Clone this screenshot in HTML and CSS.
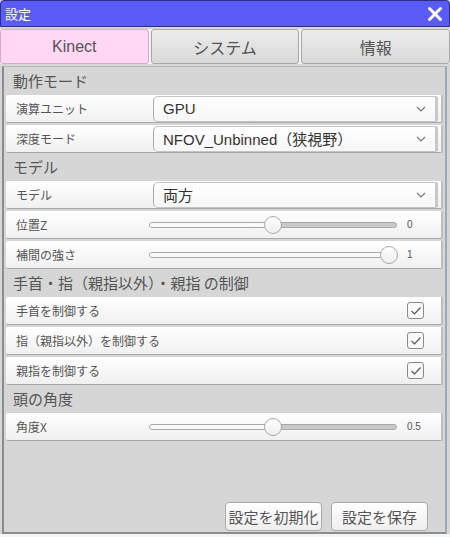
FILE: index.html
```html
<!DOCTYPE html>
<html lang="ja">
<head>
<meta charset="utf-8">
<link rel="stylesheet" href="styles.css">
</head>
<body>
<div class="window">
  <div class="titlebar">
    <span class="title">設定</span>
    <svg class="close" width="16" height="16" viewBox="0 0 16 16"><path d="M2.5 2.5 L13.5 13.5 M13.5 2.5 L2.5 13.5" stroke="#fff" stroke-width="3" stroke-linecap="round"/></svg>
  </div>
  <div class="tabs">
    <div class="tab active">Kinect</div>
    <div class="tab">システム</div>
    <div class="tab">情報</div>
  </div>
  <div class="panel">
    <div class="section">動作モード</div>
    <div class="row">
      <span class="label">演算ユニット</span>
      <div class="select"><span>GPU</span><svg class="chev" width="10" height="6" viewBox="0 0 10 6"><path d="M1 1 L5 5 L9 1" fill="none" stroke="#777" stroke-width="1.2"/></svg></div>
    </div>
    <div class="row">
      <span class="label">深度モード</span>
      <div class="select"><span>NFOV_Unbinned（狭視野）</span><svg class="chev" width="10" height="6" viewBox="0 0 10 6"><path d="M1 1 L5 5 L9 1" fill="none" stroke="#777" stroke-width="1.2"/></svg></div>
    </div>
    <div class="section">モデル</div>
    <div class="row">
      <span class="label">モデル</span>
      <div class="select"><span>両方</span><svg class="chev" width="10" height="6" viewBox="0 0 10 6"><path d="M1 1 L5 5 L9 1" fill="none" stroke="#777" stroke-width="1.2"/></svg></div>
    </div>
    <div class="row">
      <span class="label">位置Z</span>
      <div class="slider"><div class="track"><div class="fill" style="width:50%"></div><div class="thumb" style="left:50%"></div></div><span class="val">0</span></div>
    </div>
    <div class="row">
      <span class="label">補間の強さ</span>
      <div class="slider"><div class="track"><div class="fill" style="width:97%"></div><div class="thumb" style="left:97%"></div></div><span class="val">1</span></div>
    </div>
    <div class="section">手首・指（親指以外）・親指 の制御</div>
    <div class="row">
      <span class="label">手首を制御する</span>
      <div class="check"><svg width="12" height="10" viewBox="0 0 12 10"><path d="M1.5 5 L4.5 8 L10.5 1.5" fill="none" stroke="#555" stroke-width="1.2"/></svg></div>
    </div>
    <div class="row">
      <span class="label">指（親指以外）を制御する</span>
      <div class="check"><svg width="12" height="10" viewBox="0 0 12 10"><path d="M1.5 5 L4.5 8 L10.5 1.5" fill="none" stroke="#555" stroke-width="1.2"/></svg></div>
    </div>
    <div class="row">
      <span class="label">親指を制御する</span>
      <div class="check"><svg width="12" height="10" viewBox="0 0 12 10"><path d="M1.5 5 L4.5 8 L10.5 1.5" fill="none" stroke="#555" stroke-width="1.2"/></svg></div>
    </div>
    <div class="section">頭の角度</div>
    <div class="row">
      <span class="label">角度X</span>
      <div class="slider"><div class="track"><div class="fill" style="width:50%"></div><div class="thumb" style="left:50%"></div></div><span class="val">0.5</span></div>
    </div>
    <div class="spacer"></div>
    <div class="buttons">
      <button class="btn">設定を初期化</button>
      <button class="btn">設定を保存</button>
    </div>
  </div>
</div>
</body>
</html>
```
FILE: styles.css
```css
* { box-sizing: border-box; }
html, body { margin: 0; padding: 0; }
body {
  width: 450px;
  height: 537px;
  background: #f4f4f4;
  font-family: "Noto Sans CJK JP", "Noto Sans", sans-serif;
  color: #555;
  overflow: hidden;
}
.window {
  width: 450px;
  height: 534px;
  display: flex;
  flex-direction: column;
  background: #d6d6d6;
}
.titlebar {
  height: 27px;
  background: #5b5bf7;
  border: 1px solid #2e2e8a;
  border-radius: 4px 4px 0 0;
  display: flex;
  align-items: center;
  justify-content: space-between;
  padding: 0 6px 0 4px;
}
.title {
  color: #fff;
  font-size: 13px;
  line-height: 1;
}
.close { display: block; }
.tabs {
  display: flex;
  gap: 2px;
  margin-top: 2px;
  height: 35px;
  background: #f4f4f4;
}
.tab {
  flex: 1;
  display: flex;
  align-items: center;
  justify-content: center;
  font-family: "Liberation Sans", "Noto Sans CJK JP", sans-serif;
  font-size: 16px;
  color: #555;
  background: linear-gradient(#ececec, #d9d9d9);
  border: 1px solid #a8a8a8;
  border-radius: 3px;
}
.tab.active {
  background: #ffd8f6;
  border-color: #d9a9cc;
}
.panel {
  flex: 1;
  margin-top: 2px;
  margin-left: 2px;
  margin-right: 3px;
  border-left: 2px solid #8c8c8c;
  border-right: 2px solid #9aaab8;
  border-bottom: 2px solid #8c8c8c;
  border-top: 1px solid #b8b8b8;
  background: #d6d6d6;
  display: flex;
  flex-direction: column;
  padding: 2px 2px 0 2px;
}
.section {
  height: 26px;
  display: flex;
  align-items: center;
  padding: 0 0 3px 7px;
  font-size: 15px;
  color: #555;
  line-height: 1;
}
.row {
  height: 28px;
  margin-bottom: 2px;
  display: flex;
  align-items: center;
  background: linear-gradient(#ffffff, #f0f0f0);
  border-bottom: 1px solid #a9a9a9;
  border-right: 2px solid #bdbdbd;
  border-radius: 2px;
  padding-left: 10px;
}
.label {
  font-size: 12px;
  color: #555;
  min-width: 137px;
  flex: none;
  white-space: nowrap;
}
.select {
  width: 285px;
  height: 26px;
  background: linear-gradient(#ffffff, #f6f6f6);
  border: 1px solid #c4c4c4;
  border-left-color: #aaa;
  border-right: 3px solid #c8c8c8;
  border-radius: 5px 2px 2px 5px;
  display: flex;
  align-items: center;
  justify-content: space-between;
  padding: 0 9px 0 9px;
  font-family: "Liberation Sans", "Noto Sans CJK JP", sans-serif;
  font-size: 15px;
  color: #333;
}
.chev { display: block; }
.slider {
  display: flex;
  align-items: center;
  flex: 1;
}
.track {
  position: relative;
  width: 248px;
  height: 6px;
  margin-left: -4px;
  background: #c9c9c9;
  border: 1px solid #a9a9a9;
  border-radius: 3px;
}
.fill {
  height: 100%;
  background: #fafafa;
  border-radius: 3px 0 0 3px;
}
.thumb {
  position: absolute;
  top: 50%;
  width: 18px;
  height: 18px;
  margin-left: -9px;
  margin-top: -9px;
  border-radius: 50%;
  background: linear-gradient(#ffffff, #eeeeee);
  border: 1px solid #aaa;
}
.val {
  margin-left: 10px;
  font-family: "Liberation Sans", sans-serif;
  font-size: 10px;
  color: #555;
}
.check {
  margin-left: auto;
  margin-right: 17px;
  width: 17px;
  height: 17px;
  border: 1px solid #8a8a8a;
  border-radius: 3px;
  background: #fafafa;
  display: flex;
  align-items: center;
  justify-content: center;
}
.spacer { flex: 1; }
.buttons {
  display: flex;
  justify-content: flex-end;
  gap: 9px;
  padding: 0 15px 1px 0;
}
.btn {
  width: 97px;
  height: 29px;
  padding: 0;
  font-family: "Noto Sans CJK JP", sans-serif;
  font-size: 15px;
  color: #555;
  background: linear-gradient(#ffffff, #eeeeee);
  border: 1px solid #aaa;
  border-radius: 4px;
}
```
